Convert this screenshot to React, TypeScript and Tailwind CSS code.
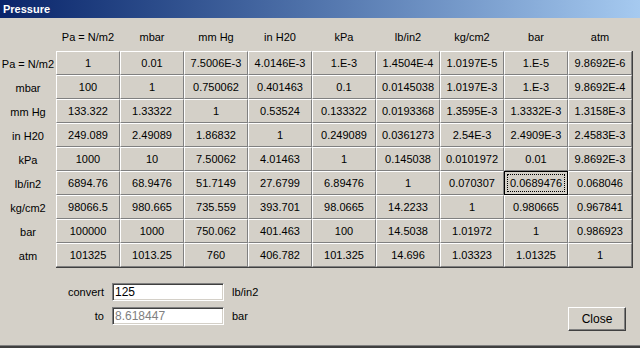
import React from "react";

const units = ["Pa = N/m2", "mbar", "mm Hg", "in H20", "kPa", "lb/in2", "kg/cm2", "bar", "atm"];

const table: string[][] = [
  ["1", "0.01", "7.5006E-3", "4.0146E-3", "1.E-3", "1.4504E-4", "1.0197E-5", "1.E-5", "9.8692E-6"],
  ["100", "1", "0.750062", "0.401463", "0.1", "0.0145038", "1.0197E-3", "1.E-3", "9.8692E-4"],
  ["133.322", "1.33322", "1", "0.53524", "0.133322", "0.0193368", "1.3595E-3", "1.3332E-3", "1.3158E-3"],
  ["249.089", "2.49089", "1.86832", "1", "0.249089", "0.0361273", "2.54E-3", "2.4909E-3", "2.4583E-3"],
  ["1000", "10", "7.50062", "4.01463", "1", "0.145038", "0.0101972", "0.01", "9.8692E-3"],
  ["6894.76", "68.9476", "51.7149", "27.6799", "6.89476", "1", "0.070307", "0.0689476", "0.068046"],
  ["98066.5", "980.665", "735.559", "393.701", "98.0665", "14.2233", "1", "0.980665", "0.967841"],
  ["100000", "1000", "750.062", "401.463", "100", "14.5038", "1.01972", "1", "0.986923"],
  ["101325", "1013.25", "760", "406.782", "101.325", "14.696", "1.03323", "1.01325", "1"],
];

function Cell({ value, focused }: { value: string; focused: boolean }) {
  if (focused) {
    return (
      <div className="w-[64px] h-[24px] border border-black p-[2px] flex">
        <div className="flex-1 border border-dotted border-black flex items-center justify-center">
          {value}
        </div>
      </div>
    );
  }
  return (
    <div className="w-[64px] h-[24px] border-t border-l border-white border-r border-b border-r-[#808080] border-b-[#808080] flex items-center justify-center">
      {value}
    </div>
  );
}

export default function App() {
  return (
    <div className="w-[640px] h-[348px] bg-[#d4d0c8] flex flex-col text-[11px] text-black font-['Liberation_Sans',Arial,sans-serif] border-b-2 border-b-[#404040] overflow-hidden">
      <div className="h-[18px] shrink-0 bg-gradient-to-r from-[#0a246a] to-[#a6caf0] text-white font-bold text-[11px] pl-[3px] flex items-center">
        Pressure
      </div>

      <div className="flex h-[33px] shrink-0 pl-[56px]">
        {units.map((u) => (
          <div key={u} className="w-[64px] flex items-center justify-center pt-[6px]">
            {u}
          </div>
        ))}
      </div>

      <div className="flex shrink-0">
        <div className="w-[56px] flex flex-col">
          {units.map((u) => (
            <div key={u} className="h-[24px] flex items-center justify-center pt-[3px]">
              {u}
            </div>
          ))}
        </div>
        <div className="flex flex-col border-r border-b border-[#404040]">
          {table.map((row, r) => (
            <div key={r} className="flex">
              {row.map((v, c) => (
                <Cell key={c} value={v} focused={r === 5 && c === 7} />
              ))}
            </div>
          ))}
        </div>
      </div>

      <div className="flex flex-1 pt-[15px] pr-[14px]">
        <div className="flex flex-col gap-[6px]">
          <div className="flex items-center h-[18px]">
            <span className="w-[106px] text-right pr-[2px]">convert</span>
            <input
              defaultValue="125"
              className="ml-[6px] w-[112px] h-[18px] bg-white text-[12px] px-[2px] outline-none border border-t-[#808080] border-l-[#808080] border-b-white border-r-white shadow-[inset_1px_1px_#404040,inset_-1px_-1px_#d4d0c8]"
            />
            <span className="ml-[8px]">lb/in2</span>
          </div>
          <div className="flex items-center h-[18px]">
            <span className="w-[106px] text-right pr-[2px]">to</span>
            <input
              value="8.618447"
              readOnly
              className="ml-[6px] w-[112px] h-[18px] bg-white text-[12px] text-[#808080] px-[2px] outline-none border border-t-[#808080] border-l-[#808080] border-b-white border-r-white shadow-[inset_1px_1px_#404040,inset_-1px_-1px_#d4d0c8]"
            />
            <span className="ml-[8px]">bar</span>
          </div>
        </div>
        <div className="flex-1 flex justify-end items-start pt-[24px]">
          <button className="w-[58px] h-[24px] text-[12px] border border-t-white border-l-white border-b-[#404040] border-r-[#404040] shadow-[inset_-1px_-1px_#808080] bg-[#d4d0c8]">
            Close
          </button>
        </div>
      </div>
      <div className="h-px bg-[#808080] shrink-0" />
    </div>
  );
}
